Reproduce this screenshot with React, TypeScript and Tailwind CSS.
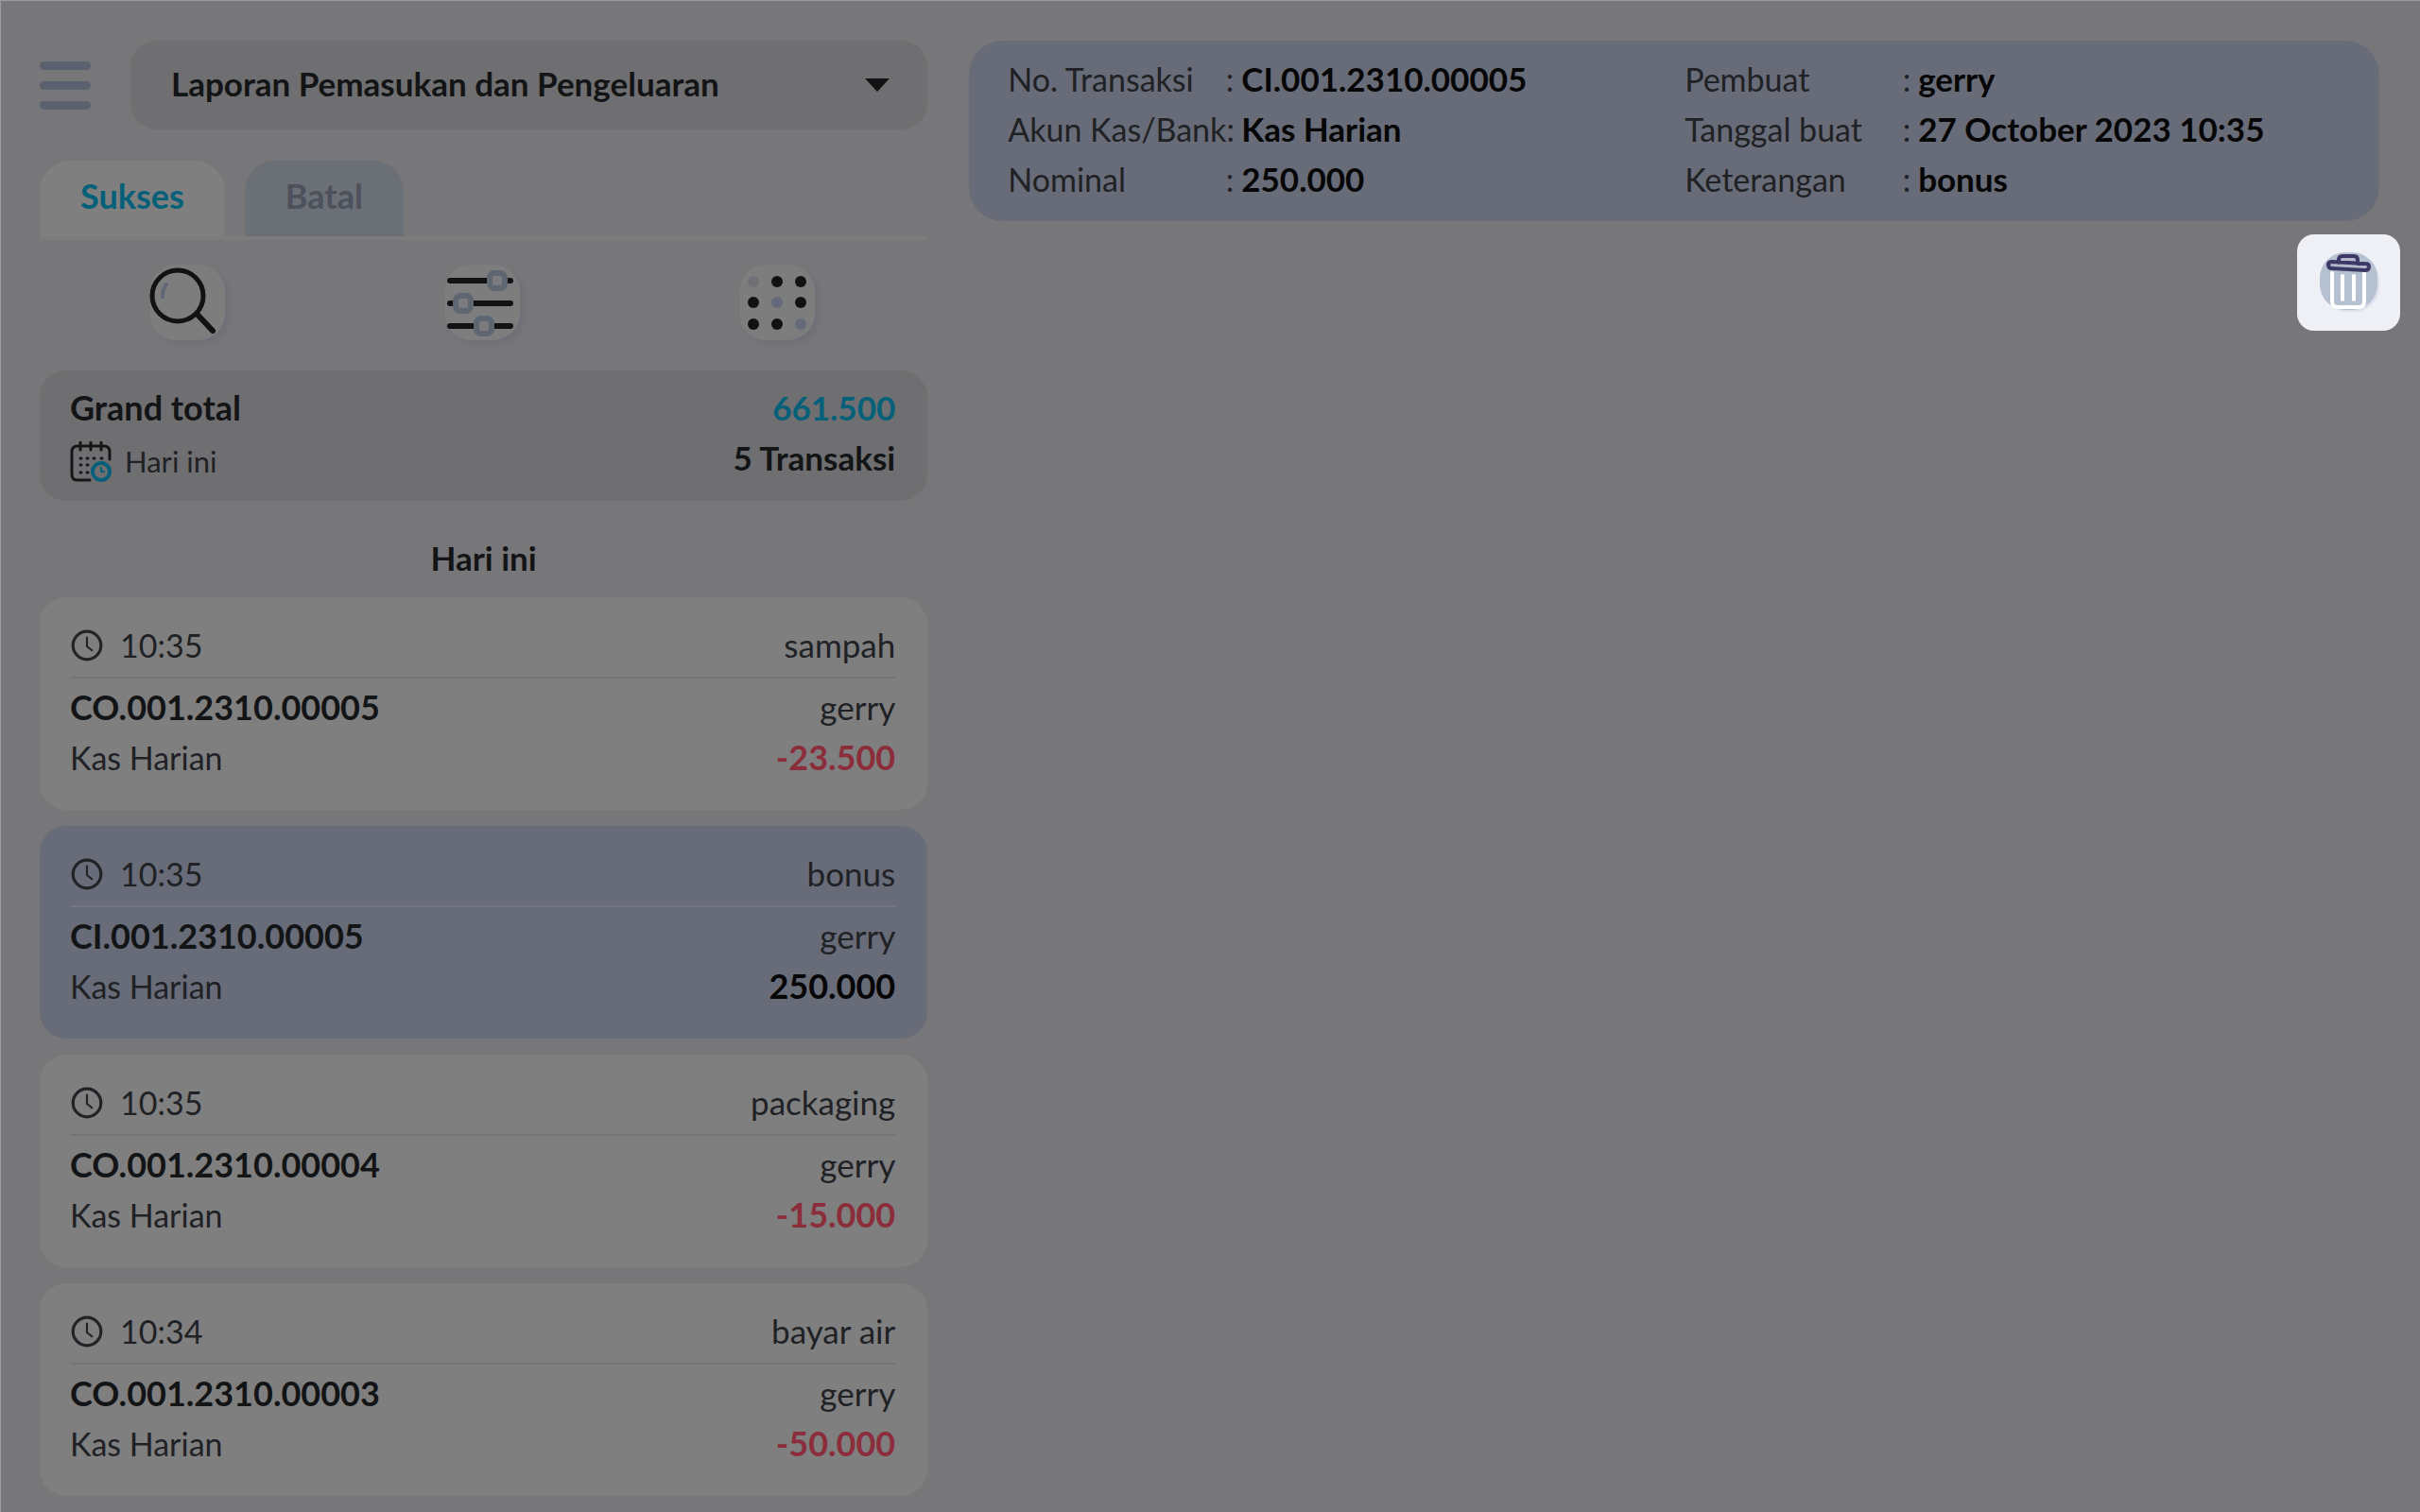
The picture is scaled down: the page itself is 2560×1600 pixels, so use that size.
import { useState } from "react";

const transactions = [
  { time: "10:35", note: "sampah", code: "CO.001.2310.00005", account: "Kas Harian", user: "gerry", amount: "-23.500" },
  { time: "10:35", note: "bonus", code: "CI.001.2310.00005", account: "Kas Harian", user: "gerry", amount: "250.000" },
  { time: "10:35", note: "packaging", code: "CO.001.2310.00004", account: "Kas Harian", user: "gerry", amount: "-15.000" },
  { time: "10:34", note: "bayar air", code: "CO.001.2310.00003", account: "Kas Harian", user: "gerry", amount: "-50.000" },
];

const details = [
  { label: "No. Transaksi", value: "CI.001.2310.00005" },
  { label: "Pembuat", value: "gerry" },
  { label: "Akun Kas/Bank", value: "Kas Harian" },
  { label: "Tanggal buat", value: "27 October 2023 10:35" },
  { label: "Nominal", value: "250.000" },
  { label: "Keterangan", value: "bonus" },
];

function SearchIcon() {
  return (
    <svg viewBox="0 0 80 80" className="size-20" fill="none" strokeLinecap="round">
      <circle cx="30" cy="33" r="27" stroke="#111213" strokeWidth="5" />
      <path d="M51 53 67 70" stroke="#111213" strokeWidth="6" />
      <path d="M14 34q0-8 4-13" stroke="#5f6676" strokeWidth="4" />
    </svg>
  );
}

function FilterIcon() {
  return (
    <svg viewBox="0 0 80 80" className="size-20" fill="none">
      <path d="M6 17H70M6 41H70M6 65H70" stroke="#111213" strokeWidth="6" strokeLinecap="round" />
      <g fill="#7c7c7e" stroke="#5e6672" strokeWidth="6">
        <rect x="48" y="9" width="16" height="16" rx="5" />
        <rect x="12" y="33" width="16" height="16" rx="5" />
        <rect x="34" y="57" width="16" height="16" rx="5" />
      </g>
    </svg>
  );
}

function GridIcon() {
  return (
    <svg viewBox="0 0 80 80" className="size-20" fill="#111213">
      <circle cx="15" cy="18" r="6" fill="#707077" />
      <circle cx="40" cy="18" r="6" />
      <circle cx="65" cy="18" r="6" />
      <circle cx="15" cy="40" r="6" />
      <circle cx="40" cy="40" r="6" fill="#656a7a" />
      <circle cx="65" cy="40" r="6" />
      <circle cx="15" cy="63" r="6" />
      <circle cx="40" cy="63" r="6" />
      <circle cx="65" cy="63" r="6" fill="#656a7a" />
    </svg>
  );
}

function CalendarIcon() {
  return (
    <svg viewBox="0 0 44 44" className="size-11" fill="none" strokeLinecap="round">
      <path d="M21 41H8q-6 0-6-6V11q0-6 6-6h28q6 0 6 6v8" stroke="#151617" strokeWidth="3" />
      <path d="M11 1v8M22 1v8M33 1v8" stroke="#151617" strokeWidth="3" />
      <path d="M11 18h1M18 18h1M25 18h1M33 18h1M11 25h1M18 25h1M11 33h1M18 33h1" stroke="#151617" strokeWidth="3" />
      <circle cx="33" cy="32" r="9" stroke="#065f78" strokeWidth="4" />
      <path d="M33 28v4h3" stroke="#065f78" strokeWidth="2" />
    </svg>
  );
}

function ClockIcon() {
  return (
    <svg viewBox="0 0 34 34" className="size-9" fill="none" stroke="#222326" strokeLinecap="round">
      <circle cx="17" cy="17" r="14" strokeWidth="3" />
      <path d="M17 9v9l5 4" strokeWidth="2" />
    </svg>
  );
}

function TrashIcon() {
  return (
    <svg viewBox="0 0 64 64" className="size-16" fill="none" strokeLinecap="round" strokeLinejoin="round">
      <rect x="3" y="2" width="61" height="61" rx="27" fill="#dde0eb" />
      <rect x="1" y="0" width="61" height="61" rx="27" fill="#b5c0d0" />
      <path d="M14 22v30q0 6 6 6h22q6 0 6-6V22M25 25v25M37 25v25" stroke="#ffffff" strokeWidth="4" />
      <path
        d="M21 11V8q0-4 4-4h12q4 0 4 4v4M14 10l35 2q4 0 4 3 0 4-4 4l-35-2q-4 0-4-4 0-3 4-3z"
        fill="#b5b9cc"
        stroke="#3c3966"
        strokeWidth="4"
      />
    </svg>
  );
}

const toolButton =
  "flex size-20 items-center justify-center rounded-[28px] bg-[#7d7d7e] shadow-[3px_4px_5px_#6f6f78]";

export default function App() {
  const [tab, setTab] = useState("Sukses");
  const [selected, setSelected] = useState("CI.001.2310.00005");

  return (
    <div className="grid h-screen grid-cols-[17fr_27fr] gap-11 overflow-hidden border-t border-l border-[#9a9b9e] bg-[#777779] pt-[42px] pr-[43px] pl-[41px] font-[Lato,sans-serif] text-[34px] leading-[53px] text-[#202124]">
      <section className="flex min-w-0 flex-col">
        <header className="flex items-center gap-[42px]">
          <button aria-label="Menu" className="flex w-[54px] flex-col gap-3">
            <span className="h-[9px] rounded-full bg-[#5b616e]" />
            <span className="h-[9px] rounded-full bg-[#5b616e]" />
            <span className="h-[9px] rounded-full bg-[#5b616e]" />
          </button>
          <label className="relative flex-1">
            <select
              aria-label="Laporan"
              className="h-[94px] w-full appearance-none rounded-[28px] bg-[#6f6f71] px-[43px] pb-[3px] text-[35px] font-bold text-[#131415] outline-none"
            >
              <option>Laporan Pemasukan dan Pengeluaran</option>
            </select>
            <svg viewBox="0 0 26 14" className="pointer-events-none absolute top-10 right-10 w-[26px]" fill="#111213">
              <path d="M0 0h26L13 14z" />
            </svg>
          </label>
        </header>

        <div role="tablist" className="mt-[33px] flex gap-[21px] border-b-4 border-[#7c7c7d] text-[36px] font-bold">
          {["Sukses", "Batal"].map((name) => (
            <button
              key={name}
              role="tab"
              aria-selected={tab === name}
              onClick={() => setTab(name)}
              className={`h-20 rounded-t-[32px] px-[43px] pb-[6px] ${
                tab === name ? "bg-[#7f7f80] text-[#046079]" : "bg-[#6b6f76] text-[#4c515b]"
              }`}
            >
              {name}
            </button>
          ))}
        </div>

        <div className="mt-[26px] grid grid-cols-3 justify-items-center pr-[3px]">
          <button aria-label="Cari" className={toolButton}>
            <SearchIcon />
          </button>
          <button aria-label="Filter" className={toolButton}>
            <FilterIcon />
          </button>
          <button aria-label="Lainnya" className={toolButton}>
            <GridIcon />
          </button>
        </div>

        <div className="mt-8 flex justify-between rounded-[28px] bg-[#6f6f71] pt-[13px] pr-[34px] pb-[15px] pl-8">
          <div>
            <p className="text-[36px] font-bold text-[#131415]">Grand total</p>
            <p className="flex items-center gap-[14px] pt-1 text-[31px]">
              <CalendarIcon />
              Hari ini
            </p>
          </div>
          <div className="text-right text-[35px] font-bold">
            <p className="text-[#046079]">661.500</p>
            <p className="text-[#131415]">5 Transaksi</p>
          </div>
        </div>

        <h2 className="mt-[34px] text-center text-[35px] font-bold text-[#131415]">Hari ini</h2>

        <ul className="mt-[15px] flex flex-col gap-[17px]">
          {transactions.map((t) => (
            <li key={t.code}>
              <button
                onClick={() => setSelected(t.code)}
                className={`block w-full rounded-[28px] pt-6 pr-[34px] pb-[29px] pl-8 ${
                  selected === t.code ? "bg-[#686c78]" : "bg-[#7f7f80]"
                }`}
              >
                <span
                  className={`flex items-center justify-between border-b-2 pb-[7px] ${
                    selected === t.code ? "border-[#737682]" : "border-[#757577]"
                  }`}
                >
                  <span className="flex items-center gap-[17px]">
                    <ClockIcon />
                    {t.time}
                  </span>
                  <span className="text-[35px]">{t.note}</span>
                </span>
                <span className="flex justify-between pt-1">
                  <span className="text-[36px] font-bold text-[#131415]">{t.code}</span>
                  <span className="text-[35px]">{t.user}</span>
                </span>
                <span className="flex justify-between">
                  <span>{t.account}</span>
                  <span
                    className={`text-[36px] font-bold ${t.amount.startsWith("-") ? "text-[#8b2d3a]" : "text-[#060607]"}`}
                  >
                    {t.amount}
                  </span>
                </span>
              </button>
            </li>
          ))}
        </ul>
      </section>

      <section className="flex min-w-0 flex-col">
        <dl className="grid grid-cols-2 gap-x-[22px] rounded-[36px] bg-[#686c78] px-[41px] pt-[14px] pb-[18px]">
          {details.map((d) => (
            <div key={d.label} className="flex">
              <dt className="flex w-[239px] justify-between whitespace-nowrap">
                <span>{d.label}</span>
                <span>:</span>
              </dt>
              <dd className="pl-2 text-[35px] font-bold text-[#060607]">{d.value}</dd>
            </div>
          ))}
        </dl>
        <button
          aria-label="Hapus"
          className="mt-[14px] -mr-[22px] flex h-[102px] w-[109px] items-center justify-center self-end rounded-[18px] bg-[#eef0f6]"
        >
          <TrashIcon />
        </button>
      </section>
    </div>
  );
}
